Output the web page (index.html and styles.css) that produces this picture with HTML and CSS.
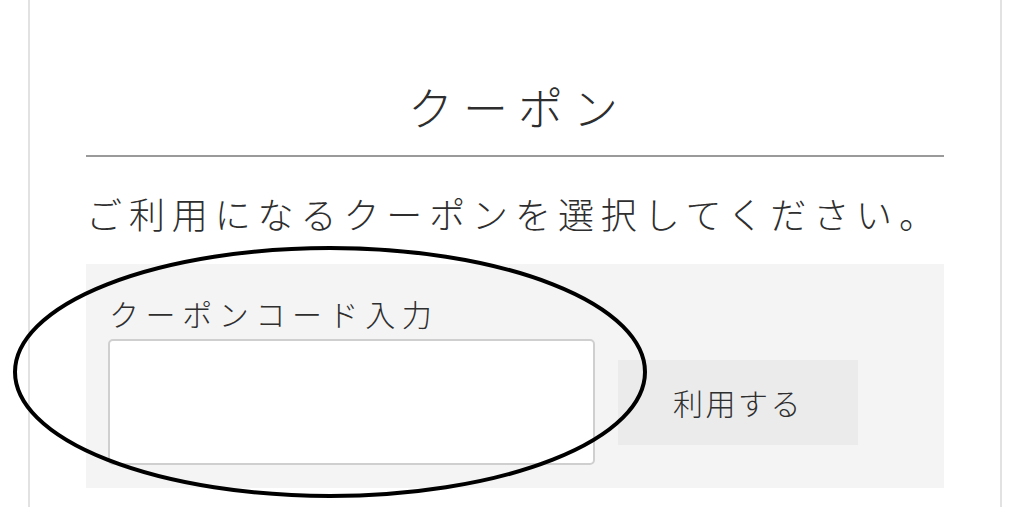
FILE: index.html
```html
<!DOCTYPE html>
<html lang="ja">
<head>
<meta charset="utf-8">
<title>クーポン</title>
<link rel="stylesheet" href="styles.css">
</head>
<body>
<div class="frame">
  <h1 class="title">クーポン</h1>
  <hr class="rule">
  <p class="desc">ご利用になるクーポンを選択してください。</p>
  <div class="coupon-box">
    <label class="label" for="code">クーポンコード入力</label>
    <div class="row">
      <input id="code" class="code-input" type="text">
      <button class="apply" type="button">利用する</button>
    </div>
  </div>
</div>
<svg class="circle-mark" width="1024" height="507" viewBox="0 0 1024 507">
  <ellipse cx="330" cy="372" rx="315" ry="124" fill="none" stroke="#000" stroke-width="4"/>
</svg>
</body>
</html>
```

FILE: styles.css
```css
html, body {
  margin: 0;
  padding: 0;
  background: #fff;
  height: 507px;
  overflow: hidden;
}
body {
  font-family: "Noto Sans CJK JP", "Noto Sans", sans-serif;
  font-weight: 300;
  color: #2e2e2e;
}
.frame {
  margin: 0 22px 0 28px;
  border-left: 2px solid #e2e2e2;
  border-right: 2px solid #e2e2e2;
  padding: 77px 56px 0 56px;
  height: 507px;
  box-sizing: border-box;
}
.title {
  margin: 0;
  font-size: 45px;
  line-height: 60px;
  font-weight: 300;
  letter-spacing: 10px;
  text-align: center;
  text-indent: 6px;
}
.rule {
  margin: 18px 0 0 0;
  border: 0;
  height: 2px;
  background: #9a9a9a;
}
.desc {
  margin: 31px 0 0 0;
  font-size: 36px;
  line-height: 50px;
  letter-spacing: 6.9px;
  white-space: nowrap;
}
.coupon-box {
  margin-top: 26px;
  background: #f4f4f4;
  padding: 29px 22px 23px 22px;
}
.label {
  display: block;
  font-size: 30px;
  line-height: 40px;
  letter-spacing: 6.6px;
  margin-left: 1px;
}
.row {
  display: flex;
  align-items: center;
  gap: 23px;
  margin-top: 6px;
}
.code-input {
  width: 487px;
  height: 126px;
  box-sizing: border-box;
  border: 2px solid #cfcfcf;
  border-radius: 5px;
  background: #fff;
  margin: 0;
}
.apply {
  width: 240px;
  height: 85px;
  border: 0;
  background: #ebebeb;
  font-family: inherit;
  font-weight: 300;
  font-size: 30px;
  letter-spacing: 2.5px;
  color: #2e2e2e;
  padding: 0;
}
.circle-mark {
  position: absolute;
  left: 0;
  top: 0;
  pointer-events: none;
}
```
